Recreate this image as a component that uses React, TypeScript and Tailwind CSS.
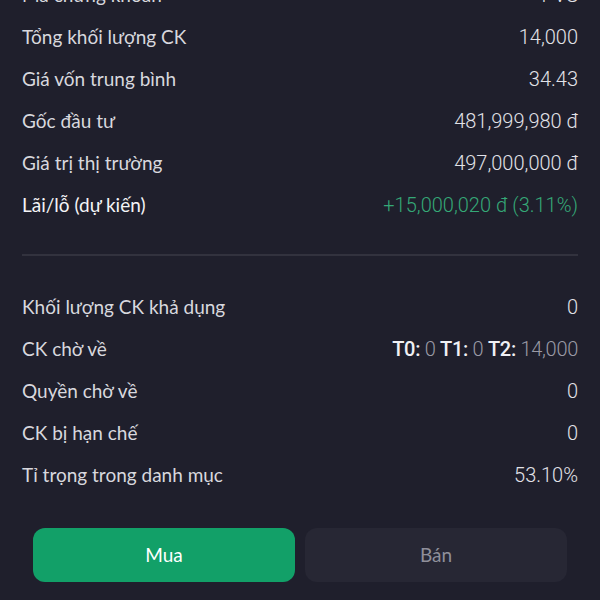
import React from 'react';

type Row = { label: string; value: React.ReactNode; strong?: boolean };

const topRows: Row[] = [
  { label: 'Mã chứng khoán', value: 'PVS' },
  { label: 'Tổng khối lượng CK', value: '14,000' },
  { label: 'Giá vốn trung bình', value: '34.43' },
  { label: 'Gốc đầu tư', value: '481,999,980 đ' },
  { label: 'Giá trị thị trường', value: '497,000,000 đ' },
  {
    label: 'Lãi/lỗ (dự kiến)',
    strong: true,
    value: <span className="text-[#35a877]">+15,000,020 đ (3.11%)</span>,
  },
];

const bottomRows: Row[] = [
  { label: 'Khối lượng CK khả dụng', value: '0' },
  {
    label: 'CK chờ về',
    value: (
      <span className="tracking-[-0.3px]">
        <b className="font-medium text-[#f0f0f4]">T0:</b> <span className="text-[#9a9aa6]">0</span>{' '}
        <b className="font-medium text-[#f0f0f4]">T1:</b> <span className="text-[#9a9aa6]">0</span>{' '}
        <b className="font-medium text-[#f0f0f4]">T2:</b> <span className="text-[#9a9aa6]">14,000</span>
      </span>
    ),
  },
  { label: 'Quyền chờ về', value: '0' },
  { label: 'CK bị hạn chế', value: '0' },
  { label: 'Tỉ trọng trong danh mục', value: '53.10%' },
];

const InfoRow: React.FC<{ row: Row }> = ({ row }) => (
  <div className="h-[42px] flex items-center justify-between">
    <span className={`text-[19px] ${row.strong ? 'text-[#f4f4f7]' : 'text-[#d8d8de]'}`}>{row.label}</span>
    <span className="text-[20px] text-[#e2e2e8] font-['Roboto',sans-serif] font-light">{row.value}</span>
  </div>
);

export default function App() {
  return (
    <div className="w-[600px] h-[600px] overflow-hidden bg-[#1f1f2c] font-['Lato',sans-serif]">
      <div className="px-[22px] -mt-[26px]">
        {topRows.map((r) => (
          <InfoRow key={r.label} row={r} />
        ))}
        <div className="mt-[28px] h-[2px] bg-[#32323e]" />
        <div className="mt-[30px]">
          {bottomRows.map((r) => (
            <InfoRow key={r.label} row={r} />
          ))}
        </div>
      </div>
      <div className="mt-[32px] px-[33px] flex gap-[10px]">
        <button className="flex-1 h-[54px] rounded-[12px] bg-[#12a068] text-white text-[19px]">Mua</button>
        <button className="flex-1 h-[54px] rounded-[12px] bg-[#272734] text-[#8f8f9a] text-[19px]">Bán</button>
      </div>
    </div>
  );
}
